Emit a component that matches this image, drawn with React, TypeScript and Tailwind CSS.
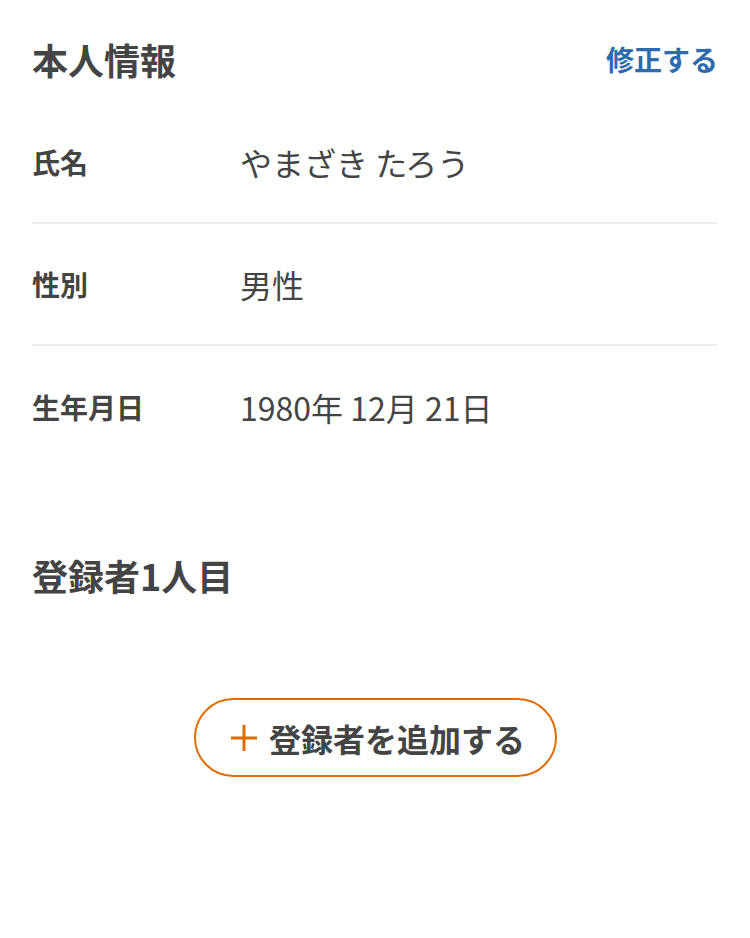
import React from "react";

const rows = [
  { label: "氏名", value: "やまざき たろう" },
  { label: "性別", value: "男性" },
  { label: "生年月日", value: "1980年 12月 21日" },
];

export default function App() {
  return (
    <div
      className="min-h-[938px] w-[750px] bg-white px-8 pt-8 text-[#444]"
      style={{ fontFamily: '"Noto Sans CJK JP", "Noto Sans", sans-serif' }}
    >
      <section>
        <div className="flex items-center justify-between">
          <h2 className="text-[36px] font-bold leading-[54px]">本人情報</h2>
          <button className="text-[28px] font-bold leading-[54px] text-[#2d6aae]">修正する</button>
        </div>

        <dl className="mt-4">
          {rows.map((row, idx) => (
            <div
              key={row.label}
              className={`flex h-[122px] items-center ${idx < rows.length - 1 ? "border-b-2 border-[#ececf0]" : ""}`}
            >
              <dt className="w-[208px] shrink-0 text-[28px] font-bold">{row.label}</dt>
              <dd className="text-[32px]">{row.value}</dd>
            </div>
          ))}
        </dl>
      </section>

      <section className="mt-[80px]">
        <h2 className="text-[36px] font-bold leading-[54px]">登録者1人目</h2>

        <div className="mt-[96px] flex justify-center">
          <button className="flex h-[79px] w-[363px] items-center justify-center gap-3 rounded-full border-2 border-[#e06d00] bg-white pl-[6px]">
            <svg width="26" height="26" viewBox="0 0 26 26" fill="none" stroke="#e06d00" strokeWidth="3">
              <path d="M13 0v26M0 13h26" />
            </svg>
            <span className="text-[32px] font-bold">登録者を追加する</span>
          </button>
        </div>
      </section>
    </div>
  );
}
